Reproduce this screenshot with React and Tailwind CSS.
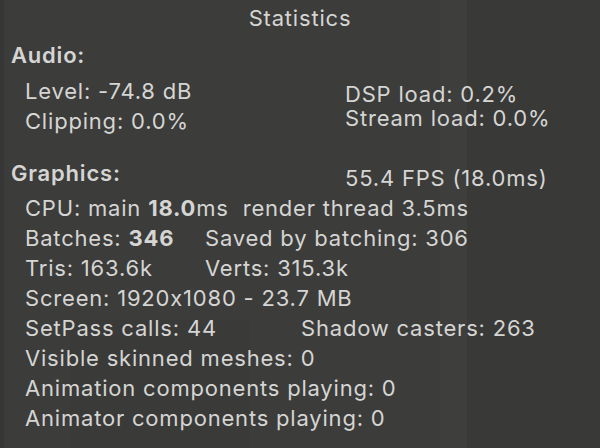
import React from 'react';

const Row = ({ children, className = '' }) => (
  <div className={`h-[30px] leading-[30px] whitespace-pre ${className}`}>{children}</div>
);

const App = () => {
  return (
    <div
      className="relative w-[600px] h-[448px] overflow-hidden bg-[#3c3c3b] text-[#d5d5d3] text-[22px] tracking-[0.8px] [font-feature-settings:'calt'_0]"
      style={{ fontFamily: 'Inter, "Noto Sans", sans-serif' }}
    >
      {/* Blurred scene behind the overlay */}
      <div className="absolute inset-0 pointer-events-none">
        <div className="absolute top-0 bottom-0 left-[467px] right-0 bg-[#393938]" />
        <div className="absolute top-0 bottom-0 left-[440px] w-[27px] bg-[#3e3e3d]" />
        <div className="absolute left-[70px] top-[320px] w-[180px] h-[128px] bg-[#3a3a39]" />
        <div className="absolute left-[0px] top-[0px] w-[4px] h-[448px] bg-[#363636]" />
      </div>

      <div className="relative">
        {/* Title */}
        <div className="h-[36px] leading-[36px] text-center">Statistics</div>

        {/* Audio */}
        <div className="mt-[4px] pl-[11px] h-[30px] leading-[30px] font-semibold">Audio:</div>
        <div className="mt-[6px] flex">
          <div className="w-[345px] pl-[25px]">
            <Row>Level: -74.8 dB</Row>
            <Row>Clipping: 0.0%</Row>
          </div>
          <div className="pt-[6px]">
            <div className="h-[24px] leading-[24px] whitespace-pre">DSP load: 0.2%</div>
            <div className="h-[24px] leading-[24px] whitespace-pre">Stream load: 0.0%</div>
          </div>
        </div>

        {/* Graphics */}
        <div className="mt-[22px] flex h-[30px] leading-[30px]">
          <div className="w-[345px] pl-[11px] font-semibold">Graphics:</div>
          <div className="pt-[5px] whitespace-pre">55.4 FPS (18.0ms)</div>
        </div>
        <div className="mt-[5px] pl-[25px]">
          <Row>
            CPU: main <span className="font-bold">18.0</span>ms  render thread 3.5ms
          </Row>
          <Row className="flex">
            <span className="w-[180px]">
              Batches: <span className="font-bold">346</span>
            </span>
            <span>Saved by batching: 306</span>
          </Row>
          <Row className="flex">
            <span className="w-[180px]">Tris: 163.6k</span>
            <span>Verts: 315.3k</span>
          </Row>
          <Row>Screen: 1920x1080 - 23.7 MB</Row>
          <Row className="flex">
            <span className="w-[276px]">SetPass calls: 44</span>
            <span>Shadow casters: 263</span>
          </Row>
          <Row>Visible skinned meshes: 0</Row>
          <Row>Animation components playing: 0</Row>
          <Row>Animator components playing: 0</Row>
        </div>
      </div>
    </div>
  );
};

export default App;
